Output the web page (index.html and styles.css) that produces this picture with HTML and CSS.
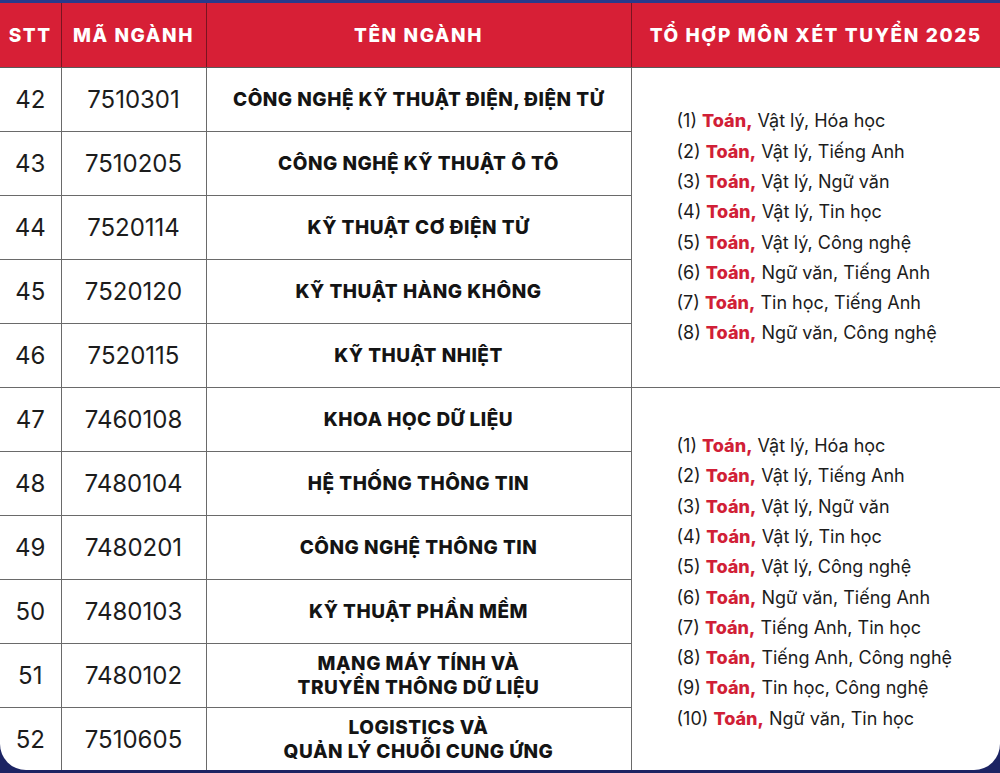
FILE: index.html
```html
<!DOCTYPE html>
<html lang="vi">
<head>
<meta charset="utf-8">
<title>Tổ hợp môn xét tuyển 2025</title>
<link rel="stylesheet" href="styles.css">
</head>
<body>
<div class="card">
<table class="tbl">
<colgroup>
<col class="c-stt"><col class="c-code"><col class="c-name"><col class="c-combo">
</colgroup>
<thead>
<tr><th>STT</th><th>MÃ NGÀNH</th><th>TÊN NGÀNH</th><th>TỔ HỢP MÔN XÉT TUYỂN 2025</th></tr>
</thead>
<tbody>
<tr><td class="num">42</td><td class="num">7510301</td><td class="name">CÔNG NGHỆ KỸ THUẬT ĐIỆN, ĐIỆN TỬ</td>
<td class="combo" rowspan="5"><ul class="list">
<li>(1) <b>Toán,</b> Vật lý, Hóa học</li>
<li>(2) <b>Toán,</b> Vật lý, Tiếng Anh</li>
<li>(3) <b>Toán,</b> Vật lý, Ngữ văn</li>
<li>(4) <b>Toán,</b> Vật lý, Tin học</li>
<li>(5) <b>Toán,</b> Vật lý, Công nghệ</li>
<li>(6) <b>Toán,</b> Ngữ văn, Tiếng Anh</li>
<li>(7) <b>Toán,</b> Tin học, Tiếng Anh</li>
<li>(8) <b>Toán,</b> Ngữ văn, Công nghệ</li>
</ul></td></tr>
<tr><td class="num">43</td><td class="num">7510205</td><td class="name">CÔNG NGHỆ KỸ THUẬT Ô TÔ</td></tr>
<tr><td class="num">44</td><td class="num">7520114</td><td class="name">KỸ THUẬT CƠ ĐIỆN TỬ</td></tr>
<tr><td class="num">45</td><td class="num">7520120</td><td class="name">KỸ THUẬT HÀNG KHÔNG</td></tr>
<tr><td class="num">46</td><td class="num">7520115</td><td class="name">KỸ THUẬT NHIỆT</td></tr>
<tr><td class="num">47</td><td class="num">7460108</td><td class="name">KHOA HỌC DỮ LIỆU</td>
<td class="combo" rowspan="6"><ul class="list list-2">
<li>(1) <b>Toán,</b> Vật lý, Hóa học</li>
<li>(2) <b>Toán,</b> Vật lý, Tiếng Anh</li>
<li>(3) <b>Toán,</b> Vật lý, Ngữ văn</li>
<li>(4) <b>Toán,</b> Vật lý, Tin học</li>
<li>(5) <b>Toán,</b> Vật lý, Công nghệ</li>
<li>(6) <b>Toán,</b> Ngữ văn, Tiếng Anh</li>
<li>(7) <b>Toán,</b> Tiếng Anh, Tin học</li>
<li>(8) <b>Toán,</b> Tiếng Anh, Công nghệ</li>
<li>(9) <b>Toán,</b> Tin học, Công nghệ</li>
<li>(10) <b>Toán,</b> Ngữ văn, Tin học</li>
</ul></td></tr>
<tr><td class="num">48</td><td class="num">7480104</td><td class="name">HỆ THỐNG THÔNG TIN</td></tr>
<tr><td class="num">49</td><td class="num">7480201</td><td class="name">CÔNG NGHỆ THÔNG TIN</td></tr>
<tr><td class="num">50</td><td class="num">7480103</td><td class="name">KỸ THUẬT PHẦN MỀM</td></tr>
<tr><td class="num">51</td><td class="num">7480102</td><td class="name">MẠNG MÁY TÍNH VÀ<br>TRUYỀN THÔNG DỮ LIỆU</td></tr>
<tr><td class="num">52</td><td class="num">7510605</td><td class="name">LOGISTICS VÀ<br>QUẢN LÝ CHUỖI CUNG ỨNG</td></tr>
</tbody>
</table>
</div>
</body>
</html>
```
FILE: styles.css
```css
html, body {
  margin: 0;
  padding: 0;
}
body {
  background: #1c2463;
  border-top: 3px solid #283a8c;
  font-family: "Inter", "Noto Sans", sans-serif;
  color: #1a1a1a;
  width: 1000px;
  height: 770px;
  overflow: hidden;
}
.card {
  background: #ffffff;
  border-radius: 0 0 26px 26px;
  overflow: hidden;
  height: 767px;
}
.tbl {
  width: 1000px;
  border-collapse: collapse;
  table-layout: fixed;
}
.c-stt { width: 61px; }
.c-code { width: 145px; }
.c-name { width: 425px; }
.c-combo { width: 369px; }
.tbl th {
  height: 64px;
  padding: 0;
  background: #d71f36;
  color: #ffffff;
  font-size: 19px;
  font-weight: 800;
  letter-spacing: 1.6px;
  text-align: center;
  border-left: 1px solid #7a1420;
  border-bottom: 1px solid #5a5a5a;
}
.tbl th:first-child { border-left: none; }
.tbl td {
  height: 63px;
  padding: 0;
  text-align: center;
  vertical-align: middle;
  border: 1px solid #6a6a6a;
}
.tbl tr td:first-child { border-left: none; }
.tbl td.combo { border-right: none; }
.num {
  font-size: 24px;
  font-weight: 400;
  color: #1c1c1c;
}
.name {
  font-size: 19px;
  font-weight: 800;
  letter-spacing: 0.5px;
  line-height: 24px;
  color: #141414;
}
.combo {
  text-align: left !important;
}
.list {
  list-style: none;
  margin: 0;
  padding: 0 0 0 45px;
  font-size: 18px;
  line-height: 30.3px;
  color: #1c1c1c;
}
.list-2 {
  padding-top: 6px;
}
.list b {
  color: #d11f37;
  font-weight: 800;
}
```
